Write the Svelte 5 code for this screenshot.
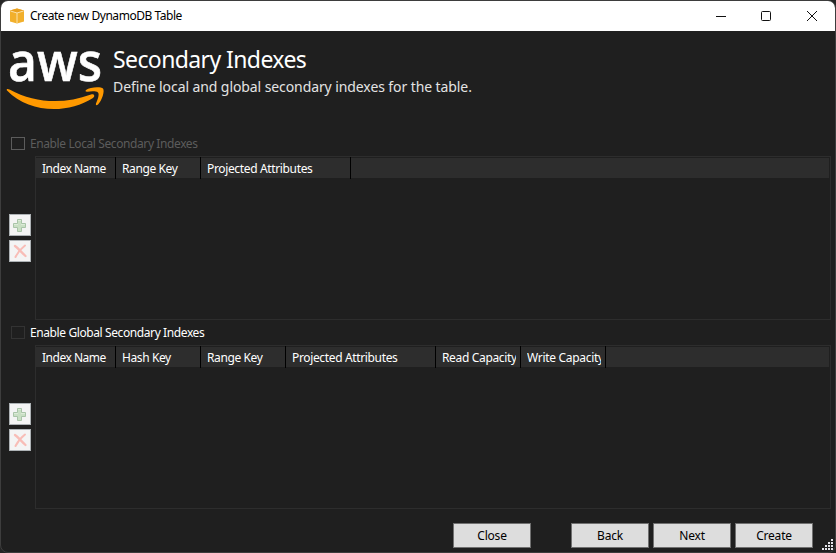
<script>
  const local = [
    { label: 'Index Name', width: 80, ls: -0.48 },
    { label: 'Range Key', width: 85, ls: -0.4 },
    { label: 'Projected Attributes', width: 150, ls: -0.35 },
  ];
  const global = [
    { label: 'Index Name', width: 80, ls: -0.48 },
    { label: 'Hash Key', width: 85, ls: -0.4 },
    { label: 'Range Key', width: 85, ls: -0.4 },
    { label: 'Projected Attributes', width: 150, ls: -0.35 },
    { label: 'Read Capacity', width: 85, ls: -0.34 },
    { label: 'Write Capacity', width: 85, ls: -0.3 },
  ];
  const dots = [[9, 0], [6, 3], [9, 3], [3, 6], [6, 6], [9, 6], [0, 9], [3, 9], [6, 9], [9, 9]];
</script>

{#snippet indexes(columns)}
  <div class="row">
    <div class="tools">
      <button class="tool" aria-label="Add">
        <svg width="20" height="20" viewBox="0 0 20 20">
          <path d="M7.500 4.500h4v4h4v4h-4v4h-4v-4h-4v-4h4z" fill="#c9dfc4" stroke="#a9c4a8" />
          <path d="M8 5.500h3M4 9.500h4M11 9.500h4" stroke="#dcebd8" />
        </svg>
      </button>
      <button class="tool" aria-label="Delete">
        <svg width="20" height="20" viewBox="0 0 20 20" fill="none" stroke="#f8bdb7" stroke-linecap="round">
          <path d="M5 5C8 7 11 11 15.500 15" stroke-width="2.300" />
          <path d="M15 4.500C11 7.500 8 11 5.500 16" stroke-width="2" />
        </svg>
      </button>
    </div>
    <div class="list">
      <div class="head">
        {#each columns as c}
          <div class="col" style="width:{c.width}px"><span style="letter-spacing:{c.ls}px">{c.label}</span></div>
        {/each}
      </div>
    </div>
  </div>
{/snippet}

<div class="window">
  <header class="titlebar">
    <svg class="app" width="16" height="16" viewBox="0 0 16 16">
      <path d="M1 2.500 8 .5l7 2v11l-7 2-7-2z" fill="#f2b02c" />
      <path d="M1 2.500 8 .5l7 2L8 5z" fill="#e9a020" />
      <path d="M1.500 3 8 5l6.500-2M8 5v10" fill="none" stroke="#fbe2ab" />
    </svg>
    <span class="caption">Create new DynamoDB Table</span>
    <svg class="controls" width="106" height="16" viewBox="0 0 106 16" fill="none" stroke="#111">
      <path d="M0 8.500h10" />
      <rect x="45.500" y="3.500" width="9" height="9" rx="1" />
      <path d="m91 3 10 10M101 3 91 13" />
    </svg>
  </header>

  <section class="hero">
    <svg class="logo" width="104" height="70" viewBox="0 0 104 70">
      <text x="7" y="39.500" textLength="94" lengthAdjust="spacingAndGlyphs" fill="#fff" stroke="#fff" stroke-width=".6">aws</text>
      <path d="M6 49.500C5 48 6.500 47.300 8.500 48.500C35 63 64 63 90 53.500C93 52.500 94.500 55 92 57C66 73.500 28 72 6 49.500Z" fill="#f90" />
      <path d="M85 49C89 45.800 100 45.500 102 47.500C104 50 101 59.500 97 63.500C95.500 65 94.500 64 95 62.500C97 58 98.500 53 97 51.500C95 49.800 90 50.300 86.500 50.700C84.500 50.900 84 50 85 49Z" fill="#f90" />
    </svg>
    <div class="headings">
      <h1>Secondary Indexes</h1>
      <p>Define local and global secondary indexes for the table.</p>
    </div>
  </section>

  <main>
    <div class="check off"><i></i><span>Enable Local Secondary Indexes</span></div>
    {@render indexes(local)}
    <div class="check on"><i></i><span>Enable Global Secondary Indexes</span></div>
    {@render indexes(global)}
  </main>

  <footer>
    <button class="close">Close</button>
    <button>Back</button>
    <button>Next</button>
    <button>Create</button>
  </footer>
  <svg class="grip" width="11" height="11">
    {#each dots as [x, y]}
      <rect {x} {y} width="2" height="2" fill="#e4e4ea" />
    {/each}
  </svg>
</div>

<style>
  :global(body) { margin: 0; background: #252525; }
  .window {
    box-sizing: border-box; width: 836px; height: 553px; position: relative;
    border: 1px solid #3d3d3d; border-radius: 8px; overflow: hidden;
    background: #1f1f1f; color: #fff;
    font: 12px/16px "Noto Sans", "Open Sans", sans-serif;
    display: flex; flex-direction: column; white-space: nowrap;
  }
  .titlebar { height: 30px; flex: none; display: flex; align-items: center; background: #fff; color: #000; }
  .app { margin-left: 8px; }
  .caption { margin-left: 5px; letter-spacing: -0.46px; }
  .controls { margin: 0 13px 0 auto; }
  .hero { display: flex; height: 106px; flex: none; }
  .logo { margin: 10px 0 0 0; flex: none; overflow: visible; }
  .logo text { font: 600 54px "Open Sans", sans-serif; }
  .headings { margin: 13px 0 0 8px; }
  h1 { margin: 0; font-size: 23px; font-weight: 400; line-height: 30px; letter-spacing: -0.6px; }
  p { margin: 3px 0 0; font-size: 14px; line-height: 20px; letter-spacing: -0.09px; color: #e3e3e3; }
  main { padding: 0 4px 0 8px; }
  .check { height: 19px; display: flex; padding-left: 2px; }
  .check i { box-sizing: border-box; width: 14px; height: 13px; border: 1px solid #5c5c5c; }
  .check span { margin: -1px 0 0 5px; letter-spacing: -0.4px; }
  .off span { color: #5c5c5c; }
  .on { padding-top: 6px; }
  .on i { border-color: #333; }
  .row { display: flex; height: 164px; }
  .tools { width: 26px; display: flex; flex-direction: column; justify-content: center; gap: 4px; }
  .tool { box-sizing: border-box; width: 22px; height: 22px; padding: 0; border: 1px solid #adb2b5; background: #f4f4f4; display: block; }
  .tool svg { display: block; }
  .list { box-sizing: border-box; flex: 1; border: 1px solid #2d2d2d; }
  .head { display: flex; height: 22px; background: linear-gradient(#1f1f1f 1px, #2d2d2d 1px 21px, #1f1f1f 21px); margin-right: 1px; }
  .col { box-sizing: border-box; height: 22px; border-right: 1px solid #000; padding: 4px 4px 0 6px; }
  .col span { display: block; overflow: hidden; }
  footer { margin-top: 14px; display: flex; justify-content: flex-end; gap: 4px; padding-right: 22px; }
  footer button { box-sizing: border-box; width: 78px; height: 25px; padding: 0; border: 1px solid #707070; background: #ddd; color: #000; font: inherit; letter-spacing: -0.2px; }
  .close { margin-right: 36px; }
  .grip { position: absolute; right: 2px; bottom: 2px; }
</style>
